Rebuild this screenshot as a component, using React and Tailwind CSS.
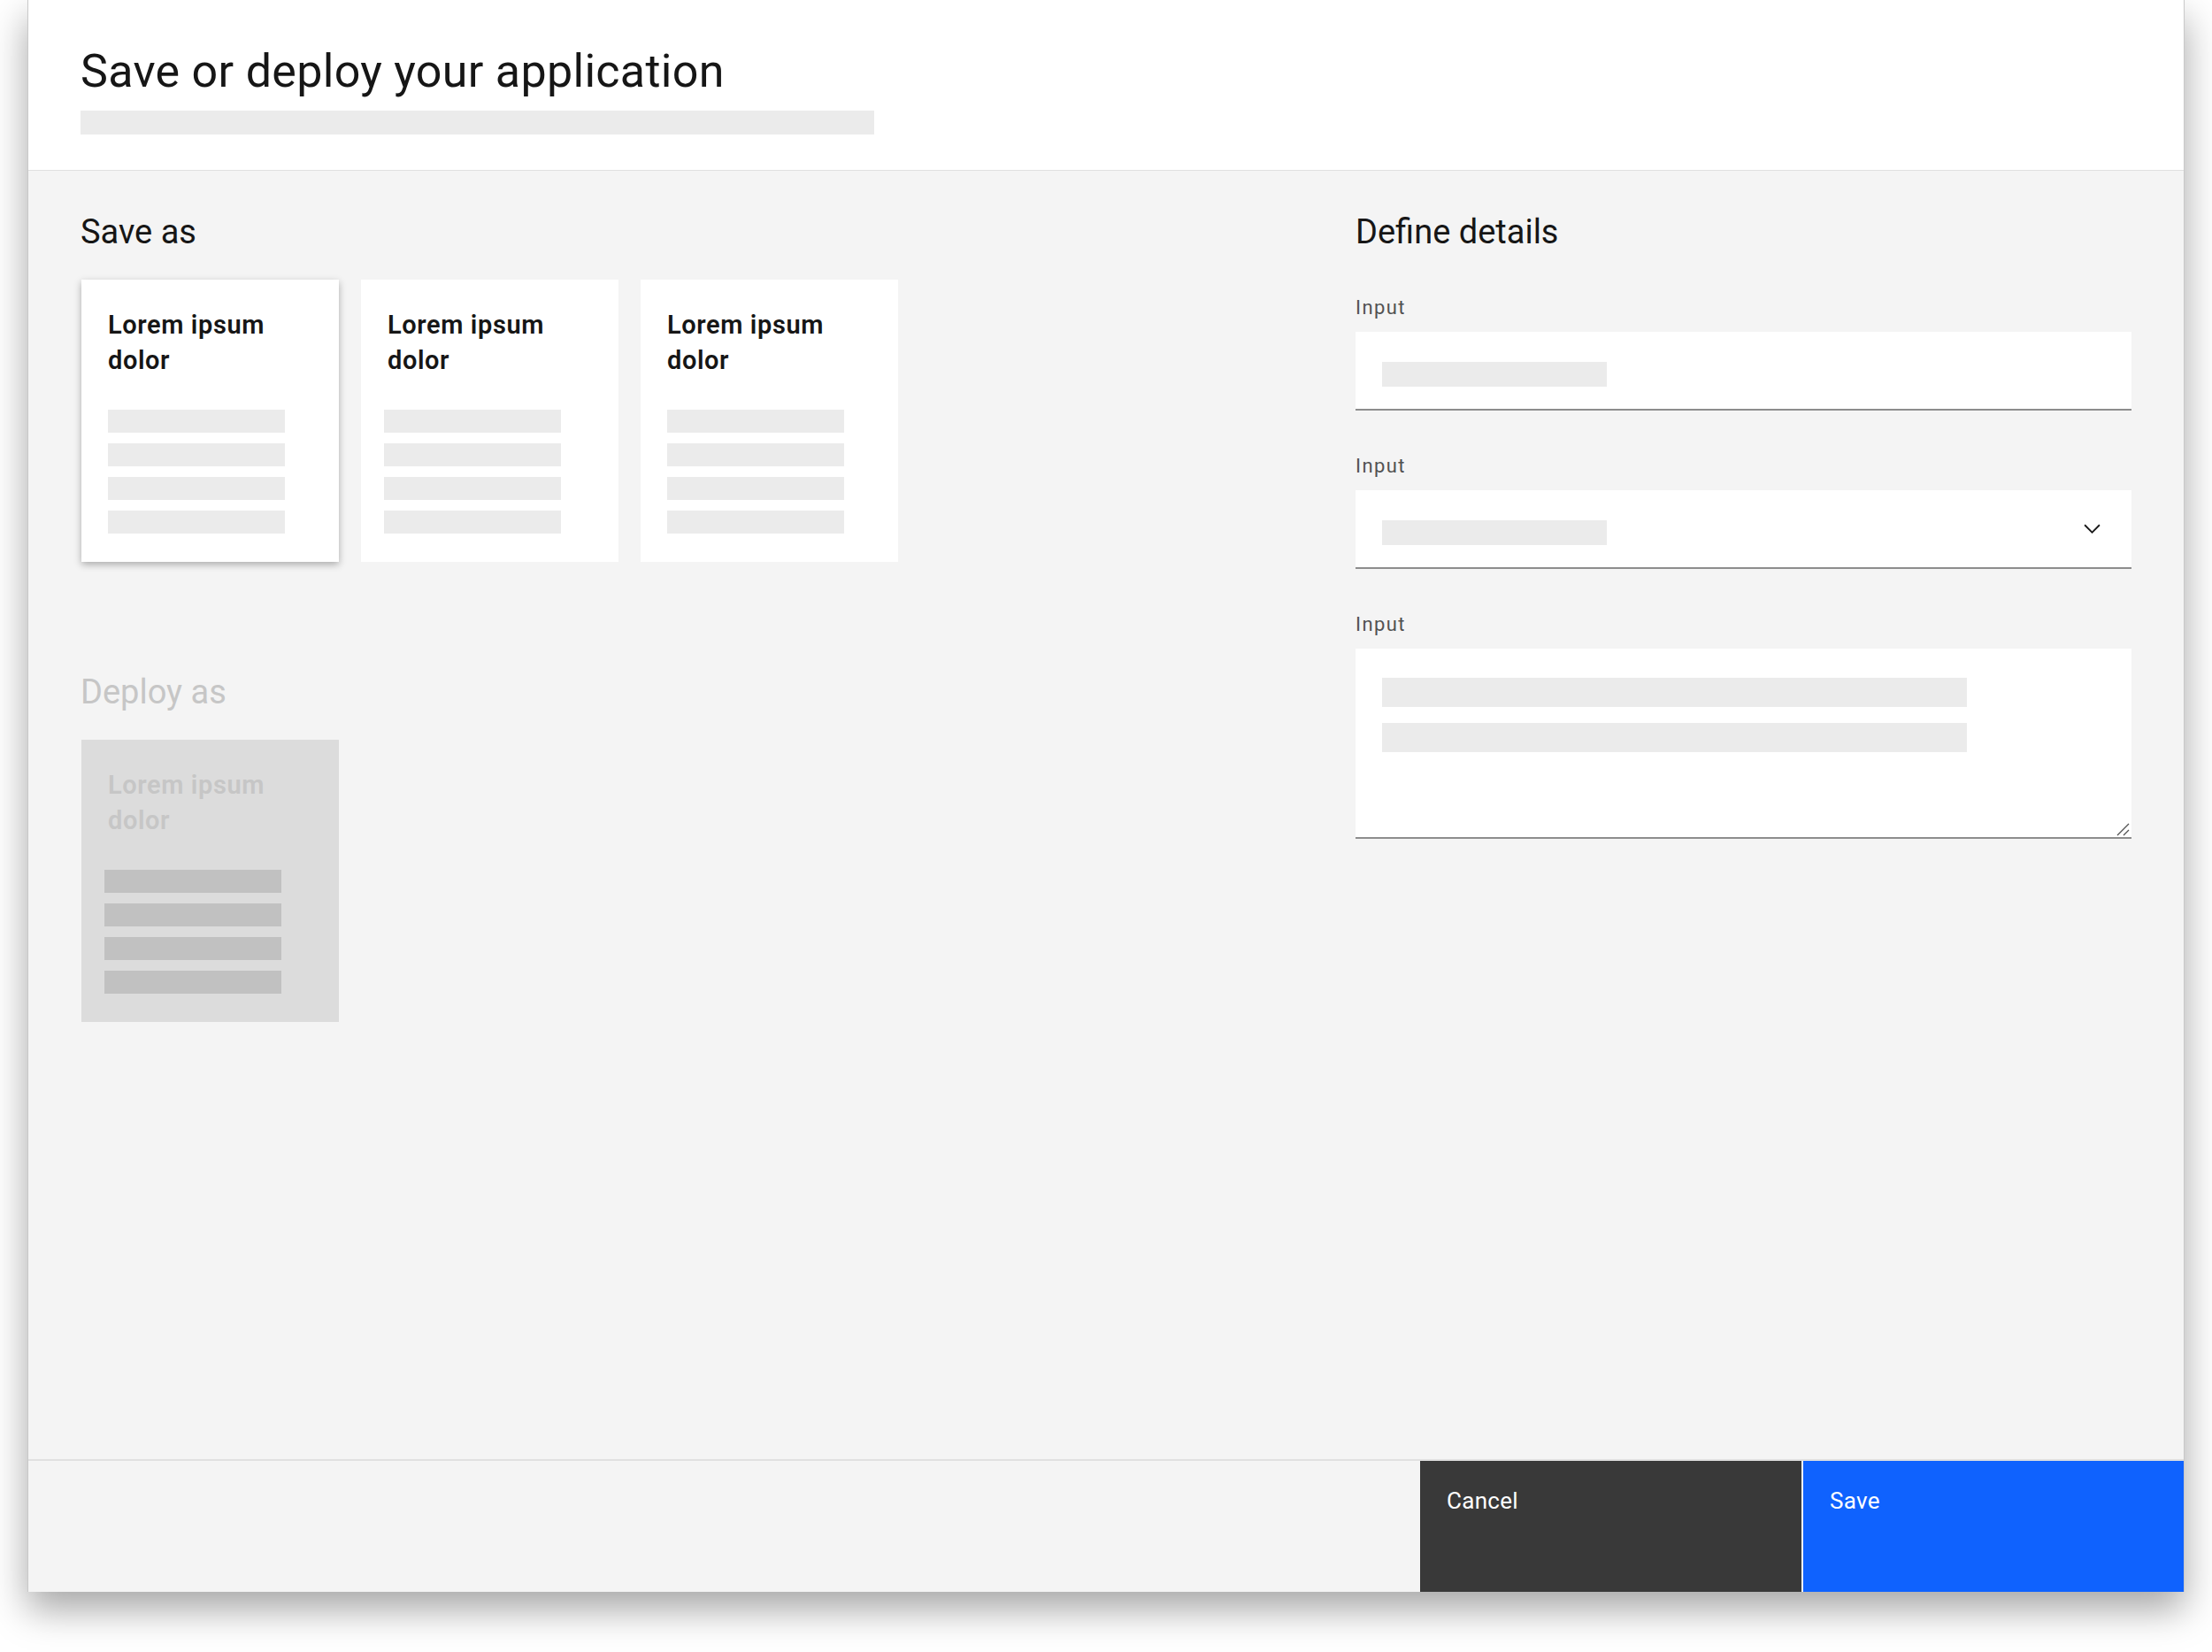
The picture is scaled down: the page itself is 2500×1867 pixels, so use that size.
function OptionCard({ selected, disabled, barShift }) {
  const tone = disabled ? 'bg-[#dcdcdc] text-[#c6c6c6]' : 'bg-white text-[#161616]'
  const lift = selected ? 'shadow-[0_3px_8px_rgba(0,0,0,0.3)]' : ''
  const bar = disabled ? 'bg-[#c1c1c1]' : 'bg-[#ebebeb]'
  return (
    <div className={`h-[319px] w-[291px] shrink-0 pl-[30px] pt-[31px] ${tone} ${lift}`}>
      <p className="text-[29px] font-semibold leading-[40px] tracking-[0.6px]">
        Lorem ipsum
        <br />
        dolor
      </p>
      <div className={`mt-[36px] flex flex-col gap-[12px] ${barShift ? '-ml-[4px]' : ''}`}>
        <div className={`h-[26px] w-[200px] ${bar}`} />
        <div className={`h-[26px] w-[200px] ${bar}`} />
        <div className={`h-[26px] w-[200px] ${bar}`} />
        <div className={`h-[26px] w-[200px] ${bar}`} />
      </div>
    </div>
  )
}

function FieldLabel({ children }) {
  return (
    <div className="mb-[13px] text-[22px] leading-[28px] tracking-[1.4px] text-[#525252]">
      {children}
    </div>
  )
}

export default function App() {
  return (
    <div className="h-[1867px] w-[2500px] bg-white pl-[31px] font-[Roboto,sans-serif] text-[#161616]">
      <div className="flex h-[1799px] w-[2438px] flex-col border-x border-[#c9c9c9] shadow-[0_20px_40px_rgba(0,0,0,0.35)]">
        {/* Header */}
        <header className="h-[193px] shrink-0 border-b border-[#e0e0e0] bg-white px-[59px] pt-[49px]">
          <h1 className="text-[52px] font-normal leading-[64px] tracking-[0.3px]">Save or deploy your application</h1>
          <div className="mt-[12px] h-[27px] w-[897px] bg-[#ebebeb]" />
        </header>

        {/* Body */}
        <main className="flex flex-1 bg-[#f4f4f4] px-[59px] pt-[45px]">
          <section className="flex-1">
            <h2 className="text-[38px] font-normal leading-[48px]">Save as</h2>
            <div className="mt-[30px] flex gap-[25px] pl-[1px]">
              <OptionCard selected />
              <OptionCard barShift />
              <OptionCard />
            </div>

            <h2 className="mt-[123px] text-[38px] font-normal leading-[48px] text-[#c6c6c6]">Deploy as</h2>
            <div className="mt-[30px] pl-[1px]">
              <OptionCard disabled barShift />
            </div>
          </section>

          <section className="w-[877px] shrink-0">
            <h2 className="text-[38px] font-normal leading-[48px]">Define details</h2>

            <div className="mt-[48px]">
              <FieldLabel>Input</FieldLabel>
              <div className="h-[89px] border-b-2 border-[#8d8d8d] bg-white pl-[30px] pt-[34px]">
                <div className="h-[28px] w-[254px] bg-[#ebebeb]" />
              </div>
            </div>

            <div className="mt-[49px]">
              <FieldLabel>Input</FieldLabel>
              <div className="flex h-[89px] items-start justify-between border-b-2 border-[#8d8d8d] bg-white pl-[30px] pr-[30px] pt-[34px]">
                <div className="h-[28px] w-[254px] bg-[#ebebeb]" />
                <svg viewBox="0 0 16 16" className="-mt-[5px] h-[29px] w-[29px]" fill="#161616">
                  <path d="M8 11L3 6l.7-.7L8 9.6l4.3-4.3.7.7z" />
                </svg>
              </div>
            </div>

            <div className="mt-[49px]">
              <FieldLabel>Input</FieldLabel>
              <div className="relative flex h-[215px] flex-col gap-[18px] border-b-2 border-[#8d8d8d] bg-white pl-[30px] pt-[33px]">
                <div className="h-[33px] w-[661px] bg-[#ebebeb]" />
                <div className="h-[33px] w-[661px] bg-[#ebebeb]" />
                <svg viewBox="0 0 16 16" className="absolute bottom-[1px] right-[2px] h-[16px] w-[16px]" stroke="#525252" strokeWidth="1.3">
                  <path d="M15 2L2 15M15 9L9 15" />
                </svg>
              </div>
            </div>
          </section>
        </main>

        {/* Footer */}
        <footer className="flex h-[150px] shrink-0 border-t-2 border-[#e0e0e0] bg-[#f4f4f4]">
          <div className="flex-1" />
          <button className="flex w-[431px] items-start bg-[#393939] px-[30px] pt-[29px] text-left text-[26px] leading-[32px] tracking-[0.3px] text-white">
            Cancel
          </button>
          <div className="w-[2px]" />
          <button className="flex w-[430px] items-start bg-[#0f62fe] px-[30px] pt-[29px] text-left text-[26px] leading-[32px] tracking-[0.3px] text-white">
            Save
          </button>
        </footer>
      </div>
    </div>
  )
}
